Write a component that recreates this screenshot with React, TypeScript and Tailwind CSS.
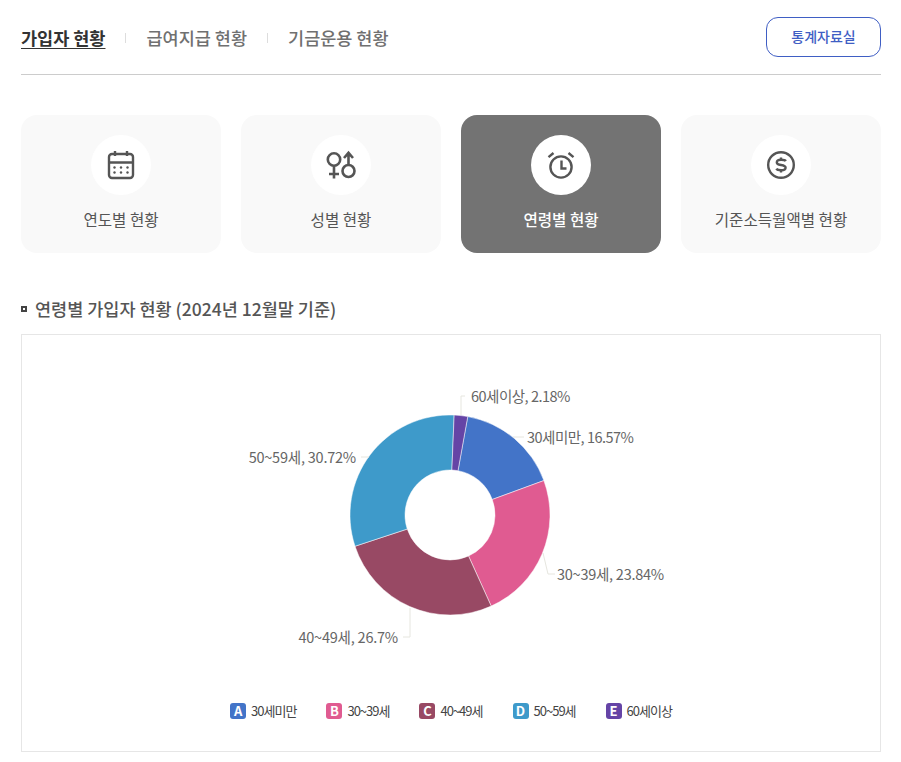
const slices = [
  { key: "A", name: "30세미만", pct: 16.57, color: "#4374c8", badge: "bg-[#4374c8]" },
  { key: "B", name: "30~39세", pct: 23.84, color: "#e05b91", badge: "bg-[#e05b91]" },
  { key: "C", name: "40~49세", pct: 26.7, color: "#984964", badge: "bg-[#984964]" },
  { key: "D", name: "50~59세", pct: 30.72, color: "#3e9aca", badge: "bg-[#3e9aca]" },
  { key: "E", name: "60세이상", pct: 2.18, color: "#6544a6", badge: "bg-[#6544a6]" },
];

// donut center and radii inside the chart box
const CX = 428;
const CY = 180;
const R = 100;
const INNER = 45;
const START = 10.2;

function point(r: number, deg: number) {
  const a = (deg * Math.PI) / 180;
  return [CX + r * Math.sin(a), CY - r * Math.cos(a)];
}

function arcPath(from: number, to: number) {
  const large = to - from > 180 ? 1 : 0;
  const [x1, y1] = point(R, from);
  const [x2, y2] = point(R, to);
  const [x3, y3] = point(INNER, to);
  const [x4, y4] = point(INNER, from);
  return `M${x1} ${y1}A${R} ${R} 0 ${large} 1 ${x2} ${y2}L${x3} ${y3}A${INNER} ${INNER} 0 ${large} 0 ${x4} ${y4}Z`;
}

function CalendarIcon() {
  return (
    <svg width="30" height="30" viewBox="0 0 30 30" fill="none" stroke="#555555" strokeWidth="2.4">
      <rect x="3" y="4" width="24" height="24" rx="3" />
      <path d="M3 12.5H27M9 1V6M21 1V6" />
      <g fill="#555555" stroke="none">
        <circle cx="8.5" cy="17.5" r="1.2" />
        <circle cx="15" cy="17.5" r="1.2" />
        <circle cx="21.5" cy="17.5" r="1.2" />
        <circle cx="8.5" cy="22.5" r="1.2" />
        <circle cx="15" cy="22.5" r="1.2" />
        <circle cx="21.5" cy="22.5" r="1.2" />
      </g>
    </svg>
  );
}

function GenderIcon() {
  return (
    <svg width="30" height="30" viewBox="0 0 30 30" fill="none" stroke="#555555" strokeWidth="2.6">
      <circle cx="8" cy="9.5" r="6.2" />
      <path d="M8 15.7V28.5M3 24H13" />
      <circle cx="22.5" cy="21" r="6" />
      <path d="M22.5 15V2.8M18 8L22.5 2.8L27 8" />
    </svg>
  );
}

function AlarmIcon() {
  return (
    <svg width="30" height="30" viewBox="0 0 30 30" fill="none" stroke="#555555" strokeWidth="2.4">
      <circle cx="15" cy="17" r="10.6" />
      <path d="M15.5 10.5V18.5H20.5" />
      <path d="M2.5 7.2L7.5 3M27.5 7.2L22.5 3" />
    </svg>
  );
}

function DollarIcon() {
  return (
    <svg width="30" height="30" viewBox="0 0 30 30" fill="none" stroke="#555555" strokeWidth="2.4">
      <circle cx="15" cy="15" r="12.8" />
      <path d="M19.8 11.2C19.2 10.2 17.5 9.8 15.2 9.8C12.3 9.8 10.8 10.8 10.8 12.4C10.8 14 12.6 14.6 15 15C17.6 15.4 19.6 16 19.6 17.7C19.6 19.3 17.9 20.2 15.2 20.2C12.8 20.2 11 19.7 10.4 18.6" />
      <path d="M15 7.5V9.8M15 20.2V22.5" />
    </svg>
  );
}

const cards = [
  { label: "연도별 현황", icon: <CalendarIcon /> },
  { label: "성별 현황", icon: <GenderIcon /> },
  { label: "연령별 현황", icon: <AlarmIcon />, active: true },
  { label: "기준소득월액별 현황", icon: <DollarIcon /> },
];

function Chart() {
  let angle = START;
  const labelLines = [
    "M491 102H502",
    "M521 218L526 239H533",
    "M388 273V302H381",
    "M339 122H347",
    "M439 80V61H443",
  ];
  const labels = [
    { x: 505, y: 108, anchor: "start", text: "30세미만, 16.57%", ls: -0.5 },
    { x: 535, y: 245, anchor: "start", text: "30~39세, 23.84%", ls: -0.25 },
    { x: 376, y: 308, anchor: "end", text: "40~49세, 26.7%", ls: -0.22 },
    { x: 334, y: 128, anchor: "end", text: "50~59세, 30.72%", ls: -0.22 },
    { x: 449, y: 67, anchor: "start", text: "60세이상, 2.18%", ls: -0.5 },
  ];
  return (
    <svg width="858" height="340" className="block">
      {slices.map((s) => {
        const from = angle;
        angle += s.pct * 3.6;
        return <path key={s.key} d={arcPath(from, angle)} fill={s.color} stroke="#ffffff" strokeWidth="0.5" />;
      })}
      {labelLines.map((d) => (
        <path key={d} d={d} fill="none" stroke="#e6e6df" strokeWidth="1" />
      ))}
      {labels.map((l) => (
        <text key={l.text} x={l.x} y={l.y} textAnchor={l.anchor as "start" | "end"} fontSize="14.5" letterSpacing={l.ls} fill="#666666">
          {l.text}
        </text>
      ))}
    </svg>
  );
}

export default function App() {
  return (
    <div className="w-[901px] h-[762px] bg-white px-[21px] pr-5 overflow-hidden font-['Noto_Sans_CJK_KR','Noto_Sans',sans-serif]">
      <header className="h-[75px] flex items-center justify-between border-b border-[#cccccc]">
        <nav className="flex items-center pt-[2px] text-[17.5px] text-[#707070] font-medium">
          <span className="font-bold text-[#333333] underline underline-offset-[3px]">가입자 현황</span>
          <span className="w-px h-[10px] bg-[#dddddd] ml-[20px] mr-[20px]" />
          <span>급여지급 현황</span>
          <span className="w-px h-[10px] bg-[#dddddd] ml-[20px] mr-[20px]" />
          <span>기금운용 현황</span>
        </nav>
        <button className="w-[115px] h-10 mb-[1px] rounded-xl border border-[#3f5ec4] text-[14px] font-medium text-[#3f5ec4]">
          통계자료실
        </button>
      </header>

      <div className="mt-10 grid grid-cols-4 gap-5">
        {cards.map((c) => (
          <div
            key={c.label}
            className={
              c.active
                ? "h-[138px] rounded-2xl bg-[#737373] flex flex-col items-center pt-5 text-white font-medium"
                : "h-[138px] rounded-2xl bg-[#f9f9f9] flex flex-col items-center pt-5 text-[#555555]"
            }
          >
            <div className="w-[60px] h-[60px] rounded-full bg-white flex items-center justify-center">{c.icon}</div>
            <div className="mt-[12px] text-[15.6px] leading-[24px]">{c.label}</div>
          </div>
        ))}
      </div>

      <h2 className="mt-[43px] flex items-center gap-[8px] text-[17.5px] leading-[26px] font-medium text-[#555555]">
        <span className="w-[6px] h-[6px] border-2 border-[#444444] bg-white" />
        연령별 가입자 현황 (2024년 12월말 기준)
      </h2>

      <section className="mt-[12px] h-[418px] border border-[#e6e6e6] bg-white">
        <Chart />
        <div className="mt-[26px] flex justify-center gap-[30px] text-[13px] tracking-[-1px] text-[#444444]">
          {slices.map((s) => (
            <div key={s.key} className="flex items-center gap-[5px]">
              <span className={`${s.badge} w-4 h-4 rounded-[3px] flex items-center justify-center text-[13px] tracking-normal font-bold text-white`}>
                {s.key}
              </span>
              {s.name}
            </div>
          ))}
        </div>
      </section>
    </div>
  );
}
